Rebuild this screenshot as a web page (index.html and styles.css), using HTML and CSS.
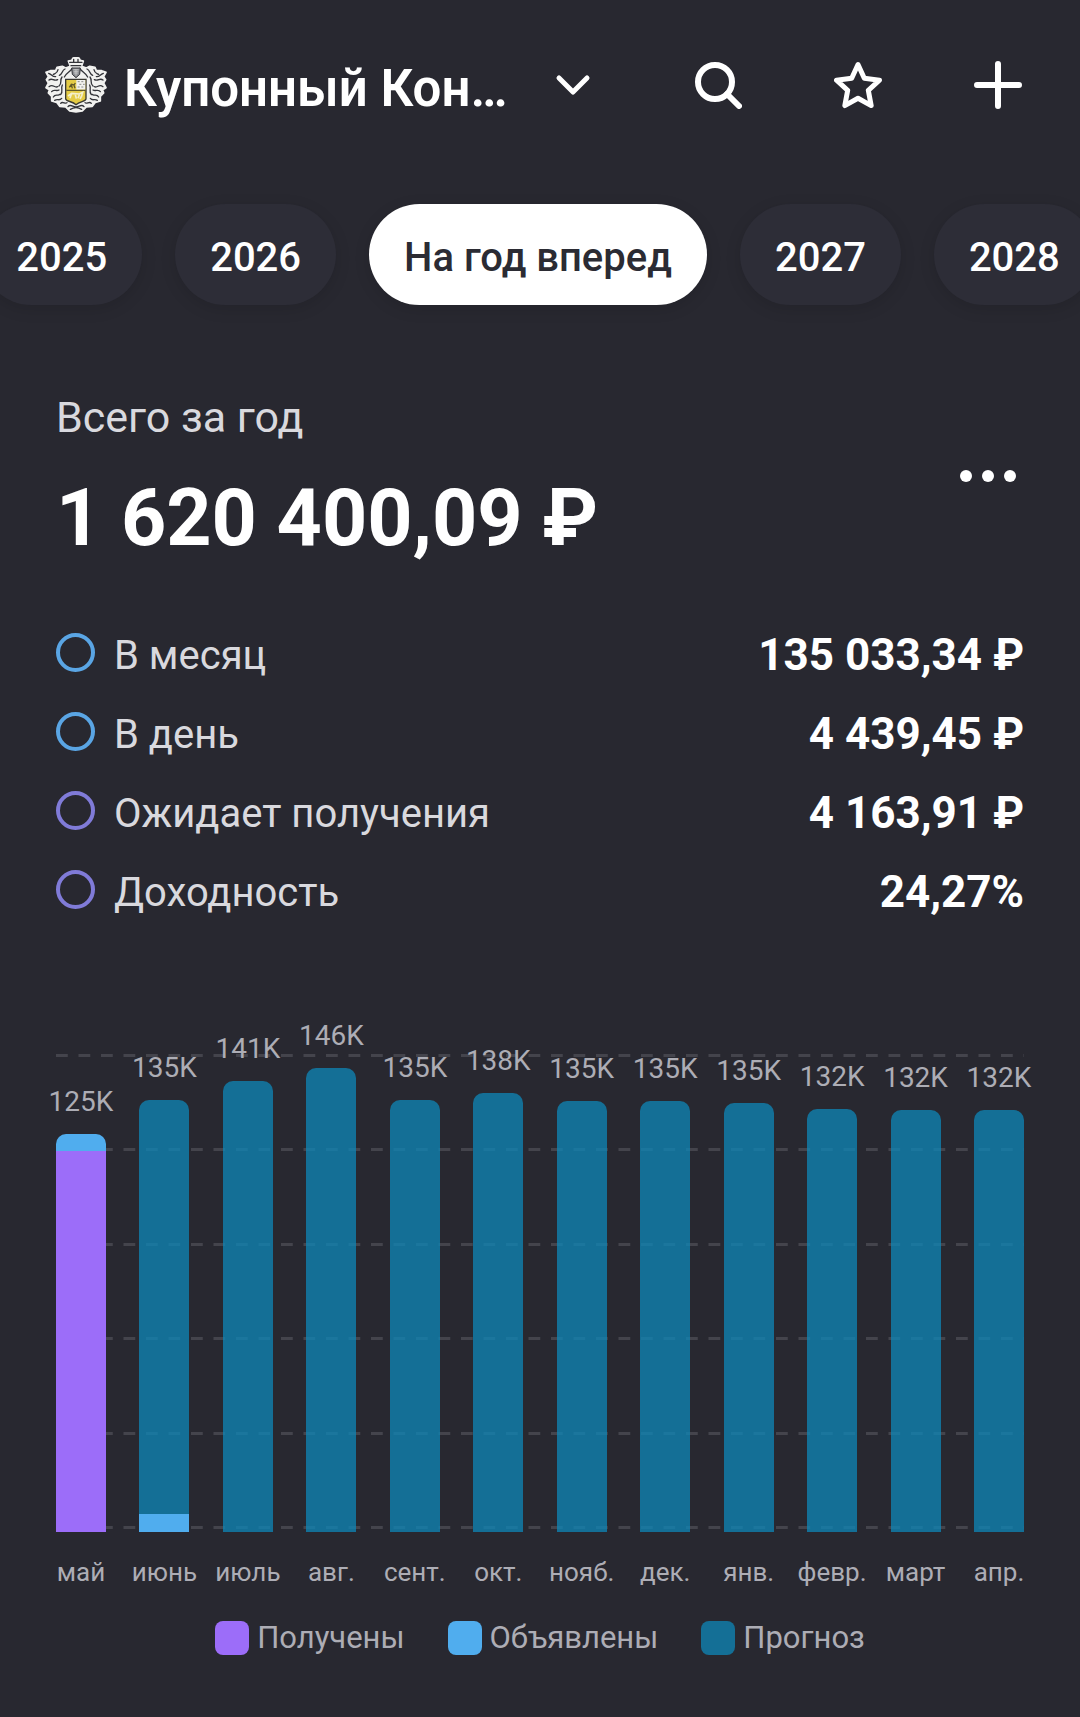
FILE: index.html
```html
<!DOCTYPE html>
<html lang="ru">
<head>
<meta charset="utf-8">
<meta name="viewport" content="width=device-width, initial-scale=1">
<title>Купонный Кон…</title>
<link rel="stylesheet" href="styles.css">
</head>
<body>
<header class="topbar">
  <button class="portfolio" type="button">
    <svg class="crest" viewBox="0 0 186 168" aria-hidden="true">
      <g fill="#f1f1ef" stroke="#f1f1ef" stroke-width="5" stroke-linejoin="round">
        <path d="M76 28 70 12 80 10 84 3 93 1 102 3 106 10 115 12 110 28 124 33 134 28 150 31 154 41 170 41 183 46 176 59 182 68 176 78 183 92 173 98 176 108 166 118 166 132 151 136 142 148 124 150 112 162 93 165 74 162 62 150 44 148 35 136 20 132 20 118 10 108 13 98 3 92 10 78 4 68 10 59 3 46 16 41 32 41 36 31 52 28 62 33Z"/>
      </g>
      <g fill="none" stroke="#34353a" stroke-width="4" stroke-linecap="round">
        <path d="M74 16H111M78 26H107M86 7V15M99 7V15M82 34C74 46 64 47 58 60M104 34C112 46 122 47 128 60M60 36C50 40 53 51 43 55M126 36C136 40 133 51 143 55M39 38C37 50 31 48 25 52M147 38C149 50 155 48 161 52M11 49C22 53 21 60 32 59M175 49C164 53 165 60 154 59M12 69C22 61 26 74 38 68M174 69C164 61 160 74 148 68M51 60C43 70 53 78 42 87M135 60C143 70 133 78 144 87M12 89C25 79 27 94 38 89M174 89C161 79 159 94 148 89M20 104C26 95 34 104 42 99M166 104C160 95 152 104 144 99M52 84C46 96 56 102 47 113M134 84C140 96 130 102 139 113M25 120C31 108 41 119 44 112M161 120C155 108 145 119 142 112M29 130C38 124 43 133 50 124M157 130C148 124 143 133 136 124M47 139C53 131 61 143 66 137M139 139C133 131 125 143 120 137M69 149C77 139 84 151 93 150 102 151 109 139 117 149M76 157C86 151 100 151 110 157"/>
      </g>
      <path d="M80 33H106L104 52 93 62 82 52Z" fill="#8b8d91" stroke="#303137" stroke-width="3"/>
      <path d="M85 38H101M86 43H100M87 48H99M93 37V56" stroke="#d9d9d9" stroke-width="2"/>
      <path d="M62 67H123V125C123 134 104 132 93 143 82 132 62 134 62 125Z" fill="#e4cb45" stroke="#393831" stroke-width="4"/>
      <path d="M94 69H121V98H94Z" fill="#f2f2ee"/>
      <path d="M98 74H104M109 74H115M103 82H109M114 82H119M98 90H104M109 90H115" stroke="#8b8b88" stroke-width="3"/>
      <path d="M64 100H121M73 91 79 82 87 84 91 78M79 83 82 94M87 85 90 94" fill="none" stroke="#605828" stroke-width="4"/>
      <path d="M69 117 80 109 103 111 113 106 110 117 105 126M79 112 75 124M91 113 94 125M103 113 99 124" fill="none" stroke="#f4efcc" stroke-width="5"/>
    </svg>
    <span class="portfolio-name">Купонный Кон…</span>
    <svg class="chevron" viewBox="0 0 36 22" aria-hidden="true"><path d="M4 4 18 18 32 4"/></svg>
  </button>
  <div class="actions">
    <button class="icon-button" type="button" aria-label="Поиск"><svg viewBox="0 0 48 48"><circle cx="21" cy="21" r="17"/><path d="M33 33 45 45"/></svg></button>
    <button class="icon-button" type="button" aria-label="Избранное"><svg viewBox="0 0 48 48"><path class="star" d="M24 3.5 30.3 17.2 45.5 19.2 34.3 29.3 37.2 44.6 24 37.3 10.8 44.6 13.7 29.3 2.5 19.2 17.7 17.2Z"/></svg></button>
    <button class="icon-button" type="button" aria-label="Добавить"><svg viewBox="0 0 48 48"><path d="M24 3V45M3 24H45"/></svg></button>
  </div>
</header>

<main>
  <nav class="periods" aria-label="Период">
    <button class="chip" type="button">2025</button>
    <button class="chip" type="button">2026</button>
    <button class="chip chip-active" type="button" aria-pressed="true">На год вперед</button>
    <button class="chip" type="button">2027</button>
    <button class="chip" type="button">2028</button>
  </nav>

  <section class="summary">
    <div>
      <h1 class="summary-label">Всего за год</h1>
      <p class="summary-total">1 620 400,09 ₽</p>
    </div>
    <button class="more" type="button" aria-label="Ещё"><svg viewBox="0 0 56 12"><circle cx="6" cy="6" r="6"/><circle cx="28" cy="6" r="6"/><circle cx="50" cy="6" r="6"/></svg></button>
  </section>

  <dl class="metrics">
    <div class="metric"><dt class="ring ring-blue">В месяц</dt><dd>135 033,34 ₽</dd></div>
    <div class="metric"><dt class="ring ring-blue">В день</dt><dd>4 439,45 ₽</dd></div>
    <div class="metric"><dt class="ring ring-violet">Ожидает получения</dt><dd>4 163,91 ₽</dd></div>
    <div class="metric"><dt class="ring ring-violet">Доходность</dt><dd>24,27%</dd></div>
  </dl>

  <figure class="chart">
    <div class="plot">
      <div class="gridlines"><i></i><i></i><i></i><i></i><i></i><i></i></div>
      <div class="bars">
        <div class="column"><span class="value">125K</span><div class="bar"><div class="announced" style="height:17px"></div><div class="received" style="height:381px"></div></div><span class="month">май</span></div>
        <div class="column"><span class="value">135K</span><div class="bar"><div class="forecast" style="height:414px"></div><div class="announced" style="height:18px"></div></div><span class="month">июнь</span></div>
        <div class="column"><span class="value">141K</span><div class="bar"><div class="forecast" style="height:451px"></div></div><span class="month">июль</span></div>
        <div class="column"><span class="value">146K</span><div class="bar"><div class="forecast" style="height:464px"></div></div><span class="month">авг.</span></div>
        <div class="column"><span class="value">135K</span><div class="bar"><div class="forecast" style="height:432px"></div></div><span class="month">сент.</span></div>
        <div class="column"><span class="value">138K</span><div class="bar"><div class="forecast" style="height:439px"></div></div><span class="month">окт.</span></div>
        <div class="column"><span class="value">135K</span><div class="bar"><div class="forecast" style="height:431px"></div></div><span class="month">нояб.</span></div>
        <div class="column"><span class="value">135K</span><div class="bar"><div class="forecast" style="height:431px"></div></div><span class="month">дек.</span></div>
        <div class="column"><span class="value">135K</span><div class="bar"><div class="forecast" style="height:429px"></div></div><span class="month">янв.</span></div>
        <div class="column"><span class="value">132K</span><div class="bar"><div class="forecast" style="height:423px"></div></div><span class="month">февр.</span></div>
        <div class="column"><span class="value">132K</span><div class="bar"><div class="forecast" style="height:422px"></div></div><span class="month">март</span></div>
        <div class="column"><span class="value">132K</span><div class="bar"><div class="forecast" style="height:422px"></div></div><span class="month">апр.</span></div>
      </div>
    </div>
    <figcaption class="legend">
      <span class="key"><i class="swatch received"></i>Получены</span>
      <span class="key"><i class="swatch announced"></i>Объявлены</span>
      <span class="key"><i class="swatch forecast"></i>Прогноз</span>
    </figcaption>
  </figure>
</main>
</body>
</html>
```
FILE: styles.css
```css
:root {
  --bg: #282830;
  --text: #d9d9de;
  --muted: #adadb5;
  --violet: #9c6df9;
  --blue: #50adee;
  --teal: rgba(13, 135, 184, 0.75);
}

*,
*::before {
  box-sizing: border-box;
}

body {
  margin: 0;
  background: var(--bg);
  color: #fff;
  font-family: Roboto, "Noto Sans", sans-serif;
  overflow-x: hidden;
}

button {
  padding: 0;
  border: 0;
  background: none;
  color: inherit;
  font: inherit;
  cursor: pointer;
}

h1, p, dl, dd, figure {
  margin: 0;
}

svg {
  display: block;
}

/* Top bar */
.topbar {
  display: flex;
  align-items: center;
  justify-content: space-between;
  padding: 54px 58px 0 45px;
}

.portfolio {
  display: flex;
  align-items: center;
}

.crest {
  width: 62px;
  height: 56px;
}

.portfolio-name {
  padding-top: 8px;
  margin: 0 48px 0 17px;
  font-size: 51px;
  line-height: 54px;
  font-weight: 600;
  white-space: nowrap;
}

.chevron {
  width: 36px;
  height: 22px;
  fill: none;
  stroke: #fff;
  stroke-width: 5;
  stroke-linecap: round;
  stroke-linejoin: round;
}

.actions {
  display: flex;
  gap: 92px;
}

.icon-button svg {
  width: 48px;
  height: 48px;
  fill: none;
  stroke: #fff;
  stroke-width: 6;
  stroke-linecap: round;
  stroke-linejoin: round;
}

.icon-button .star {
  stroke-width: 5;
}

/* Period chips */
.periods {
  display: flex;
  justify-content: center;
  gap: 33px;
  padding: 88px 4px 0 0;
}

.chip {
  flex: none;
  padding: 30px 35px 24px;
  border-radius: 51px;
  background: #2d2d37;
  box-shadow: 0 4px 16px rgba(0, 0, 0, 0.12);
  font-size: 40px;
  line-height: 47px;
  font-weight: 500;
}

.chip-active {
  background: #fff;
  color: #2b2b33;
}

/* Yearly total */
.summary {
  display: flex;
  align-items: center;
  justify-content: space-between;
  padding: 87px 64px 0 56px;
}

.summary-label {
  margin-bottom: 29px;
  color: var(--text);
  font-size: 43px;
  line-height: 50px;
  font-weight: 400;
}

.summary-total {
  font-size: 79px;
  line-height: 94px;
  font-weight: 700;
}

.more {
  margin-bottom: 6px;
}

.more svg {
  width: 56px;
  height: 12px;
  fill: #fff;
}

.metrics {
  display: grid;
  gap: 32px;
  padding: 67px 56px 0;
}

.metric {
  display: flex;
  align-items: center;
  justify-content: space-between;
  line-height: 47px;
}

.metric dt {
  display: flex;
  align-items: center;
  gap: 19px;
  color: var(--text);
  font-size: 40px;
}

.metric dd {
  font-size: 44px;
  font-weight: 700;
}

.ring::before {
  content: "";
  width: 39px;
  height: 39px;
  margin-bottom: 6px;
  border: 4px solid;
  border-radius: 50%;
}

.ring-blue::before {
  border-color: #5aa5e4;
}

.ring-violet::before {
  border-color: #807bd8;
}

/* Monthly chart */
.chart {
  padding: 103px 56px 48px;
}

.plot {
  display: grid;
}

.gridlines,
.bars {
  grid-area: 1 / 1;
  display: flex;
  justify-content: space-between;
}

.gridlines {
  flex-direction: column;
  margin: 35px 0 59px;
}

.gridlines i {
  height: 3px;
  background: linear-gradient(90deg, #44444c 50%, transparent 50%) 0 0 / calc(100% / 43) 100%;
}

.bars {
  z-index: 1;
  align-items: flex-end;
}

.column {
  display: flex;
  flex-direction: column;
  align-items: center;
  width: 50px;
  color: var(--muted);
  white-space: nowrap;
}

.value {
  margin-bottom: 15px;
  font-size: 28px;
  line-height: 34px;
}

.bar {
  width: 100%;
  border-radius: 10px 10px 0 0;
  overflow: hidden;
}

.month {
  margin-top: 24px;
  font-size: 26px;
  line-height: 32px;
}

.received {
  background: var(--violet);
}

.announced {
  background: var(--blue);
}

.forecast {
  background: var(--teal);
}

.legend {
  display: flex;
  justify-content: center;
  gap: 43px;
  margin-top: 32px;
  color: var(--muted);
  font-size: 31px;
  line-height: 36px;
}

.key {
  display: flex;
  align-items: center;
  gap: 8px;
}

.swatch {
  width: 34px;
  height: 34px;
  border-radius: 8px;
}
```
